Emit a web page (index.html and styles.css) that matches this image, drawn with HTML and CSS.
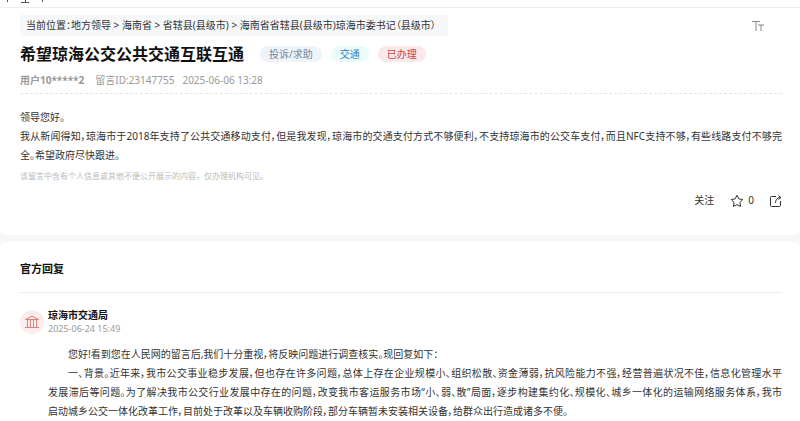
FILE: index.html
```
<!DOCTYPE html>
<html lang="zh-CN">
<head>
<meta charset="utf-8">
<title>希望琼海公交公共交通互联互通</title>
<link rel="stylesheet" href="styles.css">
</head>
<body>
<header class="topbar">
  <svg class="topbar-mark" viewBox="0 0 48 4" aria-hidden="true"><path d="M7.500 0v2M25.500 0v3M21 2.500h8M42.500 0v2"/></svg>
</header>
<main>
  <article class="card message">
    <div class="crumb-row">
      <nav class="crumbs">当前位置：<a href="#">地方领导</a> &gt; <a href="#">海南省</a> &gt; <a href="#">省辖县(县级市)</a> &gt; <a href="#">海南省省辖县(县级市)琼海市委书记（县级市）</a></nav>
      <button class="icon-button" aria-label="字号">
        <svg class="type-icon" viewBox="0 0 12 12"><path d="M0 1.500h8M4 1.500V11M6 5h6M9 5V11"/></svg>
      </button>
    </div>
    <div class="title-row">
      <h1>希望琼海公交公共交通互联互通</h1>
      <span class="tag tag-type">投诉/求助</span>
      <span class="tag tag-field">交通</span>
      <span class="tag tag-done">已办理</span>
    </div>
    <div class="meta"><b>用户10*****2</b><span>留言ID:23147755</span><time>2025-06-06 13:28</time></div>
    <div class="body-text">
      <p>领导您好。</p>
      <p>我从新闻得知，琼海市于2018年支持了公共交通移动支付，但是我发现，琼海市的交通支付方式不够便利，不支持琼海市的公交车支付，而且NFC支持不够，有些线路支付不够完全。希望政府尽快跟进。</p>
    </div>
    <p class="note">该留言中含有个人信息或其他不便公开展示的内容，仅办理机构可见。</p>
    <div class="actions">
      <button>关注</button>
      <button aria-label="收藏 0"><svg class="star" viewBox="0 0 14 14"><path d="M7 1.200l1.800 3.700 4 .6-2.900 2.900.7 4.100L7 10.600l-3.600 1.900.7-4.100L1.200 5.500l4-.6z"/></svg>0</button>
      <button aria-label="分享"><svg class="share" viewBox="0 0 12 12"><path d="M6 1.500H1.500a1 1 0 0 0-1 1v8a1 1 0 0 0 1 1h8a1 1 0 0 0 1-1V6M5.500 8c0-3 1.500-5.500 4.500-5.500M8.500.5l2.500 2-2.500 2"/></svg></button>
    </div>
  </article>
  <section class="card reply">
    <h2>官方回复</h2>
    <div class="agency">
      <span class="avatar"><svg viewBox="0 0 14 14" aria-hidden="true"><path d="M.5 4.500L7 1l6.500 3.500zM2.500 5v7M5.500 5v7M8.500 5v7M11.500 5v7M0 12.500h14"/></svg></span>
      <div><h3>琼海市交通局</h3><time>2025-06-24 15:49</time></div>
    </div>
    <div class="body-text reply-text">
      <p>您好!看到您在人民网的留言后,我们十分重视，将反映问题进行调查核实。现回复如下：</p>
      <p>一、背景。近年来，我市公交事业稳步发展，但也存在许多问题，总体上存在企业规模小、组织松散、资金薄弱，抗风险能力不强，经营普遍状况不佳，信息化管理水平<span class="phrase">发展滞后</span>等问题。为了解决我市公交行业发展中存在的问题，改变我市客运服务市场“小、弱、散”局面，逐步构建集约化、规模化、城乡一体化的运输网络服务体系，我市<span class="phrase">启动城乡</span>公交一体化改革工作，目前处于改革以及车辆收购阶段，部分车辆暂未安装相关设备，给群众出行造成诸多不便。</p>
    </div>
  </section>
</main>
</body>
</html>
```
FILE: styles.css
```
* { box-sizing: border-box; }
body { margin: 0; background: #f6f7f9; color: #333; font: 10px/19px "Noto Sans", "Noto Sans CJK SC", sans-serif; font-feature-settings: "palt"; overflow: hidden; }
h1, h2, h3, p { margin: 0; }
a { color: inherit; text-decoration: none; }
button { padding: 0; border: 0; background: none; color: inherit; font: inherit; display: flex; align-items: center; gap: 4px; }
svg { display: block; fill: none; stroke: currentColor; }
.topbar { background: #fff; height: 8px; border-bottom: 1px solid #ececee; }
.topbar-mark { width: 48px; height: 4px; color: #555; }
.card { background: #fff; }
.message { padding: 7px 18px 25px 20px; border-radius: 0 0 6px 6px; }
.crumb-row { display: flex; justify-content: space-between; align-items: center; padding-right: 18px; }
.crumbs { background: #f6f7f9; padding: 1px 12px 1px 6px; white-space: nowrap; }
.icon-button { color: #888; }
.type-icon { width: 12px; height: 12px; }
.title-row { display: flex; align-items: center; gap: 9px; height: 35px; }
h1 { font-size: 16px; line-height: 24px; color: #111; font-feature-settings: normal; margin-right: 7px; }
.tag { border-radius: 8px; padding: 0 9px; line-height: 16px; }
.tag-type { background: #eff3fa; color: #778899; }
.tag-field { background: #eafcfa; color: #3b7cc4; }
.tag-done { background: #fbe9ea; color: #c9404a; }
.meta { display: flex; color: #999; border-bottom: 1px dashed #e5e5e5; padding-bottom: 3px; }
.meta b { margin-right: 11px; }
.meta span { margin-right: 8px; }
.body-text { text-align: justify; }
.message .body-text { padding-top: 14px; }
.note { font-size: 8px; color: #bbb; padding-top: 1px; font-feature-settings: normal; }
.actions { display: flex; justify-content: flex-end; align-items: center; gap: 16px; padding-top: 6px; }
.star { width: 14px; height: 14px; }
.share { width: 12px; height: 12px; }
.reply { margin-top: 7px; padding: 16px 18px 0 20px; border-radius: 6px 6px 0 0; }
h2 { font-size: 11px; line-height: 22px; color: #111; padding-bottom: 12px; border-bottom: 1px solid #ececee; }
.agency { display: flex; align-items: center; gap: 4px; padding-top: 15px; }
.avatar { width: 24px; height: 24px; border-radius: 50%; background: #fdecec; color: #d9827f; display: grid; place-items: center; }
.avatar svg { width: 14px; height: 14px; }
h3 { font-size: 10px; line-height: 14px; color: #111; }
.agency time { display: block; font-size: 9px; line-height: 14px; color: #999; }
.reply-text { padding: 9px 0 0 28px; }
.reply-text p { text-indent: 20px; }
.phrase { white-space: nowrap; }
```
